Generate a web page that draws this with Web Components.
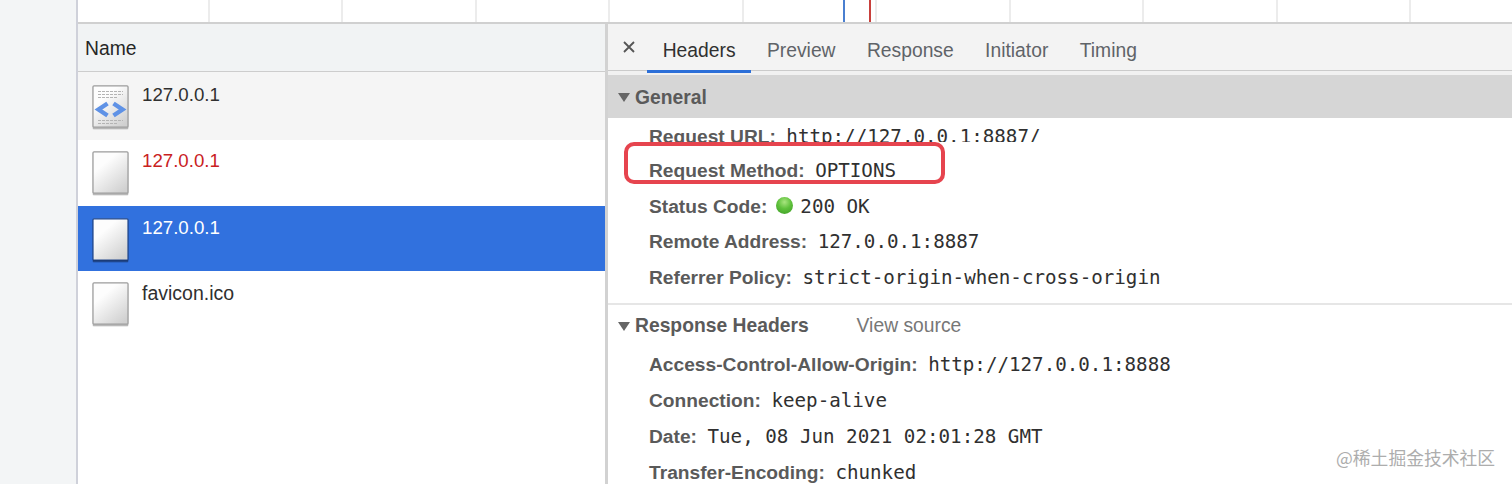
<!DOCTYPE html>
<html>
<head>
<meta charset="utf-8">
<title>Network</title>
<style>
    html,body{
        margin: 0;
        height: 484px;
        overflow: hidden;
        background: white;
    }
</style>
</head>
<body>
<devtools-page>
    <net-timeline slot="top"></net-timeline>
    <net-list slot="left" title-text="Name">
        <net-row kind="html" style="--row-h:68px;--row-bg:#f5f5f5;--icon-top:13px;--text-top:12px">127.0.0.1</net-row>
        <net-row style="--row-h:66px;--row-color:#c9211e;--icon-top:11px;--text-top:10px">127.0.0.1</net-row>
        <net-row selected style="--row-h:65px;--row-bg:#3171de;--row-color:white;--icon-top:12px;--text-top:11px">127.0.0.1</net-row>
        <net-row style="--row-h:66px;--icon-top:11px;--text-top:11px;--row-font:19.5px">favicon.ico</net-row>
    </net-list>
    <div slot="right">
        <net-tabs></net-tabs>
        <net-section heading="General" shaded>
            <net-header name="Request URL" clipped>http://127.0.0.1:8887/</net-header>
            <net-header name="Request Method" boxed>OPTIONS</net-header>
            <net-header name="Status Code" status>200 OK</net-header>
            <net-header name="Remote Address">127.0.0.1:8887</net-header>
            <net-header name="Referrer Policy">strict-origin-when-cross-origin</net-header>
        </net-section>
        <net-section heading="Response Headers" link="View source">
            <net-header name="Access-Control-Allow-Origin">http://127.0.0.1:8888</net-header>
            <net-header name="Connection">keep-alive</net-header>
            <net-header name="Date">Tue, 08 Jun 2021 02:01:28 GMT</net-header>
            <net-header name="Transfer-Encoding">chunked</net-header>
        </net-section>
    </div>
</devtools-page>
<site-mark>@稀土掘金技术社区</site-mark>

<script>
class DevtoolsPage extends HTMLElement{
    constructor(){
        super()
        this.attachShadow({mode : 'open'})
    }
    getStyles(){
        return `
            <style>
                :host{
                    display: grid;
                    grid-template-columns: 76px 2px 1fr;
                    height: 484px;
                    overflow: hidden;
                    font-family: "Liberation Sans", Arial, sans-serif;
                    background: white;
                }
                .gutter{
                    background: #f3f5f6;
                }
                .edge{
                    background: #cfd1da;
                }
                .main{
                    display: flex;
                    flex-direction: column;
                    min-width: 0;
                }
                .split{
                    display: grid;
                    grid-template-columns: 527px 3px 1fr;
                    flex: 1;
                    min-height: 0;
                }
                .bar{
                    background: #d2d2d2;
                }
                .right{
                    min-width: 0;
                    overflow: hidden;
                }
            </style>
        `
    }
    render(){
        this.shadowRoot.innerHTML = `
            ${this.getStyles()}
            <div class="gutter"></div>
            <div class="edge"></div>
            <div class="main">
                <slot name="top"></slot>
                <div class="split">
                    <slot name="left"></slot>
                    <div class="bar"></div>
                    <div class="right"><slot name="right"></slot></div>
                </div>
            </div>
        `
    }
    connectedCallback(){
        this.render()
    }
}

class NetTimeline extends HTMLElement{
    constructor(){
        super()
        this.attachShadow({mode : 'open'})
    }
    render(){
        let cells = ''
        for(let i = 0; i < 11; i++) cells += '<i></i>'
        this.shadowRoot.innerHTML = `
            <style>
                :host{
                    display: block;
                    position: relative;
                    height: 22px;
                    border-bottom: 2px solid #d0d0d0;
                    background: white;
                }
                .ticks{
                    display: grid;
                    grid-template-columns: repeat(11, 133.5px);
                    height: 100%;
                    margin-left: -2px;
                }
                i{
                    border-right: 2px solid #ececec;
                }
                .mark{
                    position: absolute;
                    top: 0;
                    bottom: 0;
                    width: 2px;
                }
                .blue{ left: 765px; background: #4a7fd0; }
                .red{ left: 791px; background: #c8403c; }
            </style>
            <div class="ticks">${cells}</div>
            <div class="mark blue"></div>
            <div class="mark red"></div>
        `
    }
    connectedCallback(){
        this.render()
    }
}

class NetList extends HTMLElement{
    constructor(){
        super()
        this.attachShadow({mode : 'open'})
    }
    render(){
        this.shadowRoot.innerHTML = `
            <style>
                :host{
                    display: block;
                    min-width: 0;
                    overflow: hidden;
                }
                .head{
                    height: 47px;
                    line-height: 49px;
                    padding-left: 7px;
                    font-size: 19.3px;
                    color: #262626;
                    background: #f1f3f4;
                    border-bottom: 1px solid #cdcdcd;
                }
            </style>
            <div class="head">${this.getAttribute('title-text')}</div>
            <slot></slot>
        `
    }
    connectedCallback(){
        this.render()
    }
}

class NetRow extends HTMLElement{
    constructor(){
        super()
        this.attachShadow({mode : 'open'})
    }
    getIcon(){
        const selected = this.hasAttribute('selected')
        const edge = selected ? '#24498c' : '#9c9c9c'
        const foot = selected ? '#1b3c78' : '#a8a8a8'
        const code = this.getAttribute('kind') == 'html' ? `
            <g stroke="#b4b4b4" stroke-width="1" stroke-dasharray="3 1">
                <path d="M6 6.5h25M6 9.5h25M6 12.5h19"/>
                <path d="M6 35.5h25M6 38.5h19"/>
            </g>
            <path d="M15.5 18.5 6.5 24.5l9 6M21.5 18.5l9 6-9 6" fill="none" stroke="#5f92e6" stroke-width="4.4"/>
        ` : ''
        return `
            <svg width="37" height="45" viewBox="0 0 37 45">
                <defs>
                    <linearGradient id="page" x1="0.3" y1="0.3" x2="0.8" y2="1">
                        <stop offset="0" stop-color="#fdfdfd"/>
                        <stop offset="1" stop-color="#d0d0d0"/>
                    </linearGradient>
                </defs>
                <rect x="0.5" y="1" width="36" height="43.5" rx="1.5" fill="${foot}" opacity="0.5"/>
                <rect x="1" y="0.8" width="35" height="41.4" rx="1" fill="url(#page)" stroke="${edge}" stroke-width="1.2"/>
                <rect x="1" y="42" width="35" height="1.6" fill="${foot}"/>
                ${code}
            </svg>
        `
    }
    render(){
        this.shadowRoot.innerHTML = `
            <style>
                :host{
                    display: flex;
                    height: var(--row-h);
                    padding-left: 14px;
                    gap: 13px;
                    background: var(--row-bg, white);
                    color: var(--row-color, #303030);
                    font-size: var(--row-font, 18.7px);
                    line-height: 22px;
                }
                svg{
                    display: block;
                    margin-top: var(--icon-top);
                }
                .text{
                    padding-top: var(--text-top, 10px);
                }
            </style>
            ${this.getIcon()}
            <div class="text"><slot></slot></div>
        `
    }
    connectedCallback(){
        this.render()
    }
}

class NetTabs extends HTMLElement{
    constructor(){
        super()
        this.attachShadow({mode : 'open'})
    }
    render(){
        const tabs = ['Headers','Preview','Response','Initiator','Timing']
        const html = tabs.map((t,i) => `<div class="tab ${i == 0 ? 'on' : ''}">${t}</div>`).join('')
        this.shadowRoot.innerHTML = `
            <style>
                :host{
                    display: flex;
                    height: 46px;
                    background: #f3f3f3;
                    border-bottom: 1px solid #cbcbcb;
                    font-size: 19.3px;
                    color: #5f6368;
                    margin-bottom: 4px;
                    box-shadow: 0 4px 0 #f1f1f1;
                }
                .close{
                    width: 39px;
                    display: flex;
                    align-items: center;
                    justify-content: center;
                    padding-left: 3px;
                    box-sizing: border-box;
                }
                .tab{
                    position: relative;
                    padding: 0 15.7px;
                    line-height: 54px;
                    height: 46px;
                }
                .on{
                    color: #303030;
                }
                .on::after{
                    content: "";
                    position: absolute;
                    left: 0;
                    right: 0;
                    bottom: -3px;
                    height: 3px;
                    background: #2c6fd8;
                }
            </style>
            <div class="close">
                <svg width="12" height="12" viewBox="0 0 12 12"><path d="M1 1l10 10M11 1L1 11" stroke="#555" stroke-width="1.8" fill="none"/></svg>
            </div>
            ${html}
        `
    }
    connectedCallback(){
        this.render()
    }
}

class NetSection extends HTMLElement{
    constructor(){
        super()
        this.attachShadow({mode : 'open'})
    }
    render(){
        const link = this.getAttribute('link')
        this.shadowRoot.innerHTML = `
            <style>
                :host{
                    display: block;
                    --row-pitch: 36px;
                }
                :host([shaded]){
                    --row-pitch: 35.4px;
                    border-bottom: 2px solid #e6e6e6;
                    padding-bottom: 8.8px;
                }
                .head{
                    display: flex;
                    align-items: center;
                    height: 41px;
                    padding: 2px 0 0 10px;
                    box-sizing: border-box;
                    font-size: 19.3px;
                    font-weight: bold;
                    color: #5a5a5a;
                }
                :host([shaded]) .head{
                    height: 43px;
                    background: #d6d6d6;
                }
                .tri{
                    width: 0;
                    height: 0;
                    border-left: 6px solid transparent;
                    border-right: 6px solid transparent;
                    border-top: 9px solid #666;
                    margin-right: 5px;
                }
                .link{
                    font-weight: normal;
                    color: #777;
                    margin-left: 48px;
                }
            </style>
            <div class="head">
                <span class="tri"></span>
                <span>${this.getAttribute('heading')}</span>
                ${link ? `<span class="link">${link}</span>` : ''}
            </div>
            <slot></slot>
        `
    }
    connectedCallback(){
        this.render()
    }
}

class NetHeader extends HTMLElement{
    constructor(){
        super()
        this.attachShadow({mode : 'open'})
    }
    render(){
        const dot = this.hasAttribute('status') ? '<span class="dot"></span>' : ''
        const box = this.hasAttribute('boxed') ? '<div class="box"></div>' : ''
        this.shadowRoot.innerHTML = `
            <style>
                :host{
                    display: block;
                    position: relative;
                    height: var(--row-pitch);
                    line-height: 37px;
                    padding-left: 41px;
                    white-space: nowrap;
                    font-size: 19.2px;
                    color: #555;
                }
                :host([clipped]){
                    height: 24px;
                    margin-bottom: 10.4px;
                    overflow: hidden;
                }
                b{
                    color: #5a5a5a;
                }
                .val{
                    font-family: "DejaVu Sans Mono", monospace;
                    font-size: 19.2px;
                    color: #303030;
                    margin-left: 10.5px;
                }
                .dot{
                    display: inline-block;
                    width: 17px;
                    height: 17px;
                    margin: 0 -3.5px 0 9px;
                    vertical-align: -1px;
                    border-radius: 50%;
                    background: radial-gradient(circle at 50% 30%, #a8e57f 0, #5fc13c 45%, #3a9a24 100%);
                }
                .box{
                    position: absolute;
                    left: 15.5px;
                    top: -10px;
                    width: 313px;
                    height: 34px;
                    border: 4.5px solid #e6444e;
                    border-radius: 10px;
                }
            </style>
            <b>${this.getAttribute('name')}:</b>${dot}<span class="val"><slot></slot></span>
            ${box}
        `
    }
    connectedCallback(){
        this.render()
    }
}

class SiteMark extends HTMLElement{
    constructor(){
        super()
        this.attachShadow({mode : 'open'})
    }
    render(){
        this.shadowRoot.innerHTML = `
            <style>
                :host{
                    position: absolute;
                    left: 1336px;
                    top: 445px;
                    font-family: "Noto Sans CJK SC", "Liberation Sans", sans-serif;
                    font-size: 17.8px;
                    line-height: 24px;
                    color: #adadad;
                    white-space: nowrap;
                }
            </style>
            <slot></slot>
        `
    }
    connectedCallback(){
        this.render()
    }
}

customElements.define('devtools-page',DevtoolsPage)
customElements.define('net-timeline',NetTimeline)
customElements.define('net-list',NetList)
customElements.define('net-row',NetRow)
customElements.define('net-tabs',NetTabs)
customElements.define('net-section',NetSection)
customElements.define('net-header',NetHeader)
customElements.define('site-mark',SiteMark)
</script>
</body>
</html>
